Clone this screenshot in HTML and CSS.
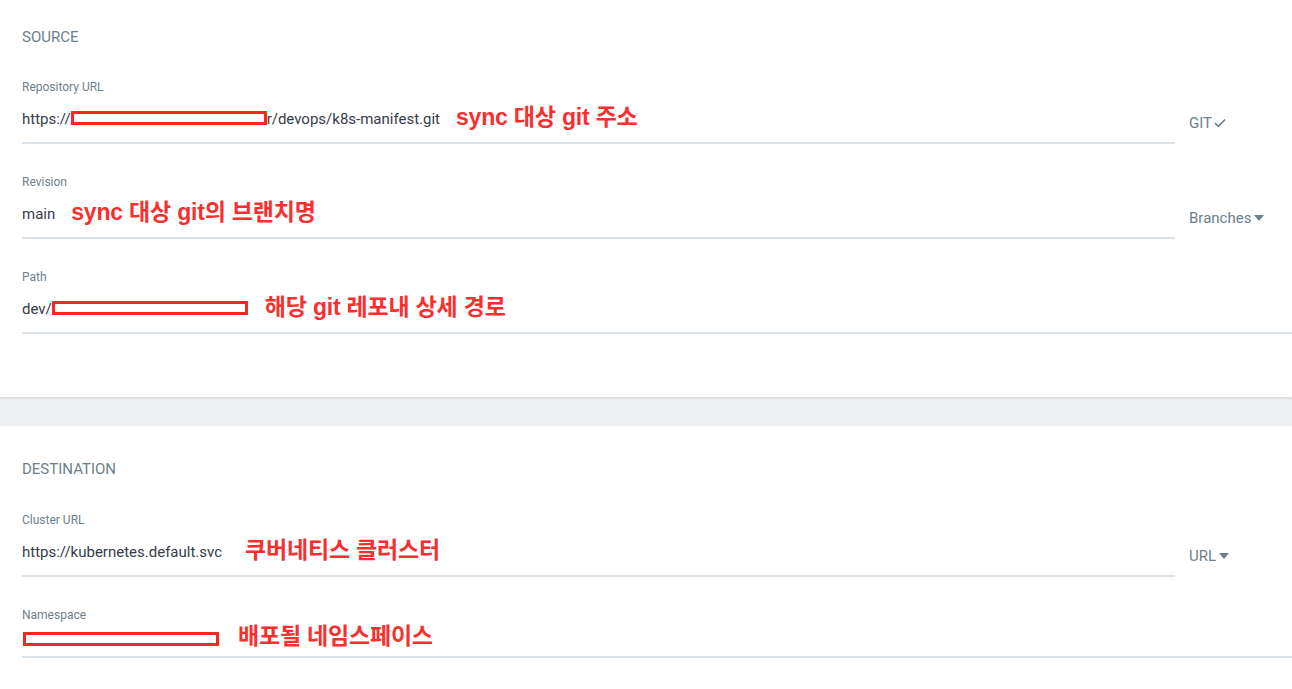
FILE: index.html
```html
<!DOCTYPE html>
<html lang="ko">
<head>
<meta charset="utf-8">
<title>Application</title>
<link rel="stylesheet" href="styles.css">
</head>
<body>
<section class="panel panel-source">
  <h3 class="panel-title">SOURCE</h3>

  <div class="row">
    <div class="field">
      <div class="field-label">Repository URL</div>
      <div class="field-value">https://<span class="redact"></span>r/devops/k8s-manifest.git<span class="note note-repo">sync 대상 git 주소</span></div>
    </div>
    <div class="side">GIT<svg class="check" width="12" height="10" viewBox="0 0 12 10"><path d="M1 5.2 L4.3 8.3 L11 1.5" fill="none" stroke="#6d7f8b" stroke-width="1.6"/></svg></div>
  </div>

  <div class="row">
    <div class="field">
      <div class="field-label">Revision</div>
      <div class="field-value">main<span class="note note-rev">sync 대상 git의 브랜치명</span></div>
    </div>
    <div class="side">Branches<svg class="caret" width="10" height="6" viewBox="0 0 10 6"><path d="M0 0 H10 L5 6 Z" fill="#6d7f8b"/></svg></div>
  </div>

  <div class="row">
    <div class="field">
      <div class="field-label">Path</div>
      <div class="field-value">dev/<span class="redact"></span><span class="note note-path">해당 git 레포내 상세 경로</span></div>
    </div>
  </div>
</section>

<section class="panel panel-dest">
  <h3 class="panel-title">DESTINATION</h3>

  <div class="row">
    <div class="field">
      <div class="field-label">Cluster URL</div>
      <div class="field-value">https://kubernetes.default.svc<span class="note note-cluster">쿠버네티스 클러스터</span></div>
    </div>
    <div class="side">URL<svg class="caret" width="10" height="6" viewBox="0 0 10 6"><path d="M0 0 H10 L5 6 Z" fill="#6d7f8b"/></svg></div>
  </div>

  <div class="row">
    <div class="field field-compact">
      <div class="field-label">Namespace</div>
      <div class="field-value"><span class="redact redact-ns"></span><span class="note note-ns">배포될 네임스페이스</span></div>
    </div>
  </div>
</section>
</body>
</html>
```

FILE: styles.css
```css
* { box-sizing: border-box; }

html, body {
  margin: 0;
  padding: 0;
}

body {
  background: #eef1f4;
  font-family: Roboto, "Liberation Sans", "Noto Sans CJK KR", sans-serif;
  color: #363c4a;
  height: 689px;
  overflow: hidden;
}

.panel {
  background: #ffffff;
  padding-left: 22px;
}

.panel-source {
  padding-top: 27px;
  padding-bottom: 63px;
  box-shadow: 0 1px 3px rgba(0, 0, 0, 0.14);
  position: relative;
  z-index: 1;
}

.panel-dest {
  margin-top: 29px;
  padding-top: 33px;
  height: 263px;
  overflow: hidden;
}

.panel-title {
  margin: 0 0 2px 0;
  font-size: 15px;
  line-height: 20px;
  font-weight: 400;
  color: #6d7f8b;
}

.panel-dest .panel-title {
  margin-bottom: 3px;
}

.row {
  display: flex;
  align-items: flex-end;
}

.field {
  flex: 1;
  padding-top: 31px;
  border-bottom: 2px solid #dbe3ea;
}

.field-label {
  font-size: 12px;
  line-height: 14px;
  color: #6d7f8b;
}

.field-value {
  margin-top: 8px;
  padding-bottom: 10px;
  font-size: 15px;
  line-height: 30px;
  height: 40px;
  color: #363c4a;
  white-space: nowrap;
}

.field-compact .field-value {
  margin-top: 4px;
  line-height: 20px;
  height: 30px;
}

.side {
  width: 117px;
  padding-left: 14px;
  padding-bottom: 11px;
  font-size: 15px;
  line-height: 20px;
  color: #6d7f8b;
  display: flex;
  align-items: center;
}

.check { margin-left: 2px; }
.caret { margin-left: 3px; }

.redact {
  display: inline-block;
  width: 196px;
  height: 14px;
  border: 3px solid #fb2620;
  background: #ffffff;
  vertical-align: -1px;
}

.redact-ns {
  margin-left: 1px;
  vertical-align: -3px;
}

.note {
  display: inline-block;
  font-family: "Liberation Sans", "Noto Sans CJK KR", sans-serif;
  font-weight: 700;
  font-size: 23px;
  color: #f7302f;
  vertical-align: -1px;
  letter-spacing: -0.2px;
}

.note-repo { margin-left: 16px; }
.note-rev { margin-left: 16px; }
.note-path { margin-left: 17px; }
.note-cluster { margin-left: 23px; }
.note-ns { margin-left: 19px; }
```
